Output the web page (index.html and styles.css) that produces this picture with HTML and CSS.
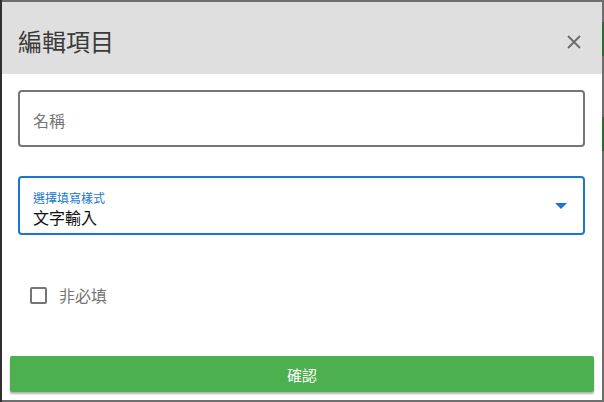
FILE: index.html
```html
<!DOCTYPE html>
<html lang="zh-Hant">
<head>
<meta charset="utf-8">
<link rel="stylesheet" href="styles.css">
</head>
<body>
<div class="backdrop">
  <div class="stripe stripe-a"></div>
  <div class="stripe stripe-b"></div>
  <div class="dialog">
    <div class="header">
      <h1 class="title">編輯項目</h1>
      <button class="close" aria-label="close">
        <svg width="14" height="14" viewBox="0 0 14 14"><path d="M1 1L13 13M13 1L1 13" stroke="#6b6b6b" stroke-width="1.8" fill="none"/></svg>
      </button>
    </div>
    <div class="content">
      <div class="field name-field">
        <span class="placeholder">名稱</span>
      </div>
      <div class="field select-field">
        <div class="select-text">
          <span class="select-label">選擇填寫樣式</span>
          <span class="select-value">文字輸入</span>
        </div>
        <svg class="arrow" width="12" height="6" viewBox="0 0 12 6"><path d="M0 0H12L6 6Z" fill="#1976d2"/></svg>
      </div>
      <label class="check-row">
        <span class="checkbox"></span>
        <span class="check-label">非必填</span>
      </label>
    </div>
    <div class="actions">
      <button class="confirm">確認</button>
    </div>
  </div>
</div>
</body>
</html>
```
FILE: styles.css
```css
html, body {
  margin: 0;
  padding: 0;
  width: 604px;
  height: 402px;
  overflow: hidden;
}
body {
  font-family: "Noto Sans CJK TC", "Noto Sans", sans-serif;
  background: #2f2f2f;
}
.backdrop {
  position: relative;
  width: 604px;
  height: 402px;
  background: linear-gradient(to right, #2f2f2f 0, #2f2f2f 2px, #6e6e6e 2px);
  padding: 2px 2px 2px 2px;
  box-sizing: border-box;
}
.stripe {
  position: absolute;
  right: 0;
  width: 2px;
  background: #2f6a2f;
}
.stripe-a { top: 22px; height: 34px; }
.stripe-b { top: 117px; height: 34px; }
.dialog {
  width: 600px;
  height: 398px;
  background: #fff;
  display: flex;
  flex-direction: column;
}
.header {
  height: 72px;
  background: #dfdfdf;
  display: flex;
  align-items: center;
  justify-content: space-between;
  padding: 0 16px 0 16px;
  box-sizing: border-box;
}
.title {
  margin: 0;
  font-size: 24px;
  font-weight: 400;
  color: #3a3a3a;
  padding-top: 4px;
}
.close {
  background: none;
  border: 0;
  padding: 0;
  width: 14px;
  height: 14px;
  margin-right: 5px;
  margin-top: 8px;
  display: flex;
}
.content {
  flex: 1;
  padding: 16px 16px 0 16px;
  display: flex;
  flex-direction: column;
}
.field {
  height: 57px;
  border: 2px solid #757575;
  border-radius: 4px;
  box-sizing: border-box;
  display: flex;
  align-items: center;
  padding: 0 14px 0 13px;
  width: 567px;
}
.placeholder {
  font-size: 16px;
  color: #757575;
  padding-top: 2px;
}
.select-field {
  margin-top: 29px;
  height: 59px;
  border-color: #1976d2;
  justify-content: space-between;
}
.select-text {
  display: flex;
  flex-direction: column;
  padding-top: 6px;
}
.select-label {
  font-size: 12px;
  line-height: 16px;
  color: #1976d2;
}
.select-value {
  font-size: 16px;
  line-height: 22px;
  color: #111;
}
.arrow {
  margin-right: 2px;
  margin-top: 0;
}
.check-row {
  margin-top: 48px;
  display: flex;
  align-items: center;
  padding-left: 12px;
}
.checkbox {
  width: 13px;
  height: 13px;
  border: 2px solid #757575;
  border-radius: 2px;
}
.check-label {
  margin-left: 12px;
  font-size: 16px;
  color: #757575;
}
.actions {
  padding: 0 8px 8px 8px;
}
.confirm {
  width: 584px;
  height: 36px;
  background: #4caf50;
  border: 0;
  border-radius: 2px;
  color: #fff;
  font-family: "Noto Sans CJK TC", "Noto Sans", sans-serif;
  font-size: 15px;
  box-shadow: 0 2px 2px rgba(0,0,0,0.3);
  display: block;
}
```
